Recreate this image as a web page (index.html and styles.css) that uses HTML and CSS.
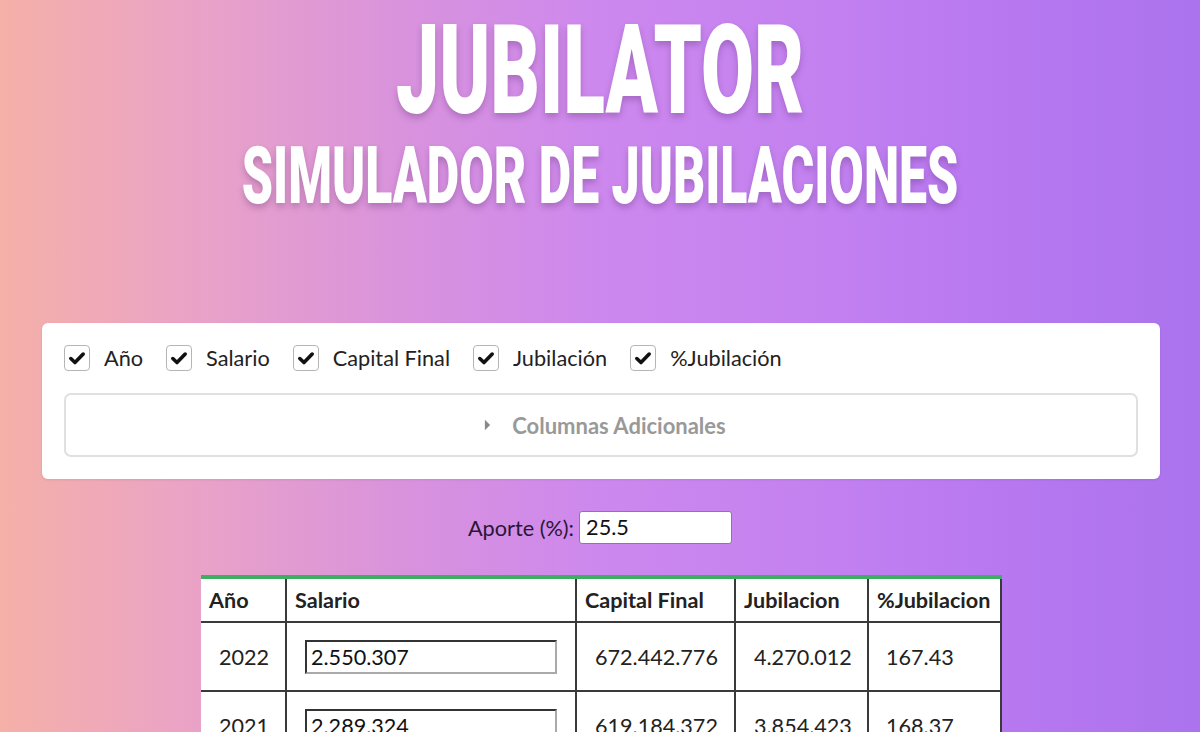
FILE: index.html
```html
<!DOCTYPE html>
<html lang="es">
<head>
<meta charset="utf-8">
<title>Jubilator</title>
<link rel="stylesheet" href="styles.css">
</head>
<body>
<header class="hero">
  <h1 class="title"><span class="squeeze">JUBILATOR</span></h1>
  <h2 class="subtitle"><span class="squeeze sub">SIMULADOR DE JUBILACIONES</span></h2>
</header>

<section class="card">
  <div class="checks">
    <label class="check"><span class="box"><svg viewBox="0 0 16 16" width="18" height="18"><path d="M2.5 8.5 L6.2 12 L13.5 4.5" fill="none" stroke="#111" stroke-width="3.2" stroke-linecap="round" stroke-linejoin="round"/></svg></span>Año</label>
    <label class="check"><span class="box"><svg viewBox="0 0 16 16" width="18" height="18"><path d="M2.5 8.5 L6.2 12 L13.5 4.5" fill="none" stroke="#111" stroke-width="3.2" stroke-linecap="round" stroke-linejoin="round"/></svg></span>Salario</label>
    <label class="check"><span class="box"><svg viewBox="0 0 16 16" width="18" height="18"><path d="M2.5 8.5 L6.2 12 L13.5 4.5" fill="none" stroke="#111" stroke-width="3.2" stroke-linecap="round" stroke-linejoin="round"/></svg></span>Capital Final</label>
    <label class="check"><span class="box"><svg viewBox="0 0 16 16" width="18" height="18"><path d="M2.5 8.5 L6.2 12 L13.5 4.5" fill="none" stroke="#111" stroke-width="3.2" stroke-linecap="round" stroke-linejoin="round"/></svg></span>Jubilación</label>
    <label class="check"><span class="box"><svg viewBox="0 0 16 16" width="18" height="18"><path d="M2.5 8.5 L6.2 12 L13.5 4.5" fill="none" stroke="#111" stroke-width="3.2" stroke-linecap="round" stroke-linejoin="round"/></svg></span>%Jubilación</label>
  </div>
  <div class="extra">
    <svg class="caret" viewBox="0 0 8 12" width="7" height="12"><path d="M1 0 L7 6 L1 12 Z" fill="#888"/></svg>
    <span>Columnas Adicionales</span>
  </div>
</section>

<div class="aporte">
  <span class="aporte-label">Aporte (%):</span>
  <span class="aporte-input">25.5</span>
</div>

<table class="grid">
  <colgroup>
    <col class="c1"><col class="c2"><col class="c3"><col class="c4"><col class="c5">
  </colgroup>
  <thead>
    <tr><th>Año</th><th>Salario</th><th>Capital Final</th><th>Jubilacion</th><th>%Jubilacion</th></tr>
  </thead>
  <tbody>
    <tr>
      <td class="yr">2022</td>
      <td class="sal"><span class="sal-input">2.550.307</span></td>
      <td class="cap">672.442.776</td>
      <td class="jub">4.270.012</td>
      <td class="pct">167.43</td>
    </tr>
    <tr>
      <td class="yr">2021</td>
      <td class="sal"><span class="sal-input">2.289.324</span></td>
      <td class="cap">619.184.372</td>
      <td class="jub">3.854.423</td>
      <td class="pct">168.37</td>
    </tr>
  </tbody>
</table>
</body>
</html>
```
FILE: styles.css
```css
html, body {
  margin: 0;
  padding: 0;
}
body {
  min-height: 732px;
  background: linear-gradient(90deg, #f5b0a8 0%, #e9a2c8 17%, #d993dc 33%, #cd88ee 50%, #c482f0 67%, #b878f0 83%, #ab73ee 100%);
  font-family: Lato, "Open Sans", sans-serif;
  color: #222;
  overflow: hidden;
}
.hero {
  padding-top: 9px;
  text-align: center;
  color: #fff;
}
.title, .subtitle {
  margin: 0;
  font-family: Roboto, "DejaVu Sans", sans-serif;
  font-weight: 900;
  line-height: 1;
  text-shadow: 0 4px 8px rgba(60, 20, 80, 0.25);
}
.title {
  font-size: 124px;
}
.subtitle {
  margin-top: 4px;
  font-size: 79px;
}
.squeeze {
  display: inline-block;
  transform: scaleX(0.62);
}
.squeeze.sub {
  transform: scaleX(0.633);
}
.card {
  margin: 107px 40px 0 42px;
  background: #fff;
  border-radius: 6px;
  padding: 22px;
  box-shadow: 0 1px 3px rgba(0,0,0,0.08);
}
.checks {
  display: flex;
  align-items: center;
  gap: 23px;
  height: 26px;
}
.check {
  display: flex;
  align-items: center;
  gap: 14px;
  font-size: 21.7px;
  color: #222;
}
.box {
  width: 24px;
  height: 24px;
  border: 1px solid #b5b5b5;
  border-radius: 4px;
  display: flex;
  align-items: center;
  justify-content: center;
  background: #fff;
}
.extra {
  margin-top: 22px;
  height: 60px;
  border: 2px solid #e0e0e0;
  border-radius: 7px;
  display: flex;
  align-items: center;
  justify-content: center;
  gap: 21px;
  font-size: 22px;
  font-weight: bold;
  color: #999;
}
.caret {
  margin-left: 8px;
}
.aporte {
  margin-top: 32px;
  display: flex;
  justify-content: center;
  align-items: center;
  gap: 5px;
  font-size: 21.7px;
}
.aporte-label {
  color: #2a1633;
}
.aporte-input {
  width: 145px;
  height: 31px;
  line-height: 31px;
  padding-left: 6px;
  background: #fff;
  border: 1px solid #8a7a99;
  border-radius: 3px;
  color: #111;
  box-sizing: content-box;
}
.grid {
  margin: 31px 0 0 201px;
  border-collapse: collapse;
  background: #fff;
  border-top: 4px solid #3cb060;
  font-size: 21.6px;
  width: 800px;
  table-layout: fixed;
}
.c1 { width: 85px; }
.c2 { width: 290px; }
.c3 { width: 159px; }
.c4 { width: 133px; }
.c5 { width: 133px; }
.grid th, .grid td {
  border: 2px solid #3a3a3a;
  color: #222;
}
.grid tr > :first-child { border-left: none; }
.grid thead th {
  border-top: none;
}
.grid th {
  height: 42px;
  text-align: left;
  padding: 0 8px;
  font-weight: bold;
}
.grid td {
  height: 67px;
  padding: 0;
}
.yr { padding-left: 18px !important; }
.sal { padding-left: 18px !important; }
.sal-input {
  display: block;
  width: 244px;
  height: 30px;
  line-height: 30px;
  padding-left: 4px;
  border: 2px solid;
  border-color: #333 #aaa #aaa #333;
  color: #111;
}
.cap { padding-left: 18px !important; }
.jub { padding-left: 18px !important; }
.pct { padding-left: 17px !important; }
```
